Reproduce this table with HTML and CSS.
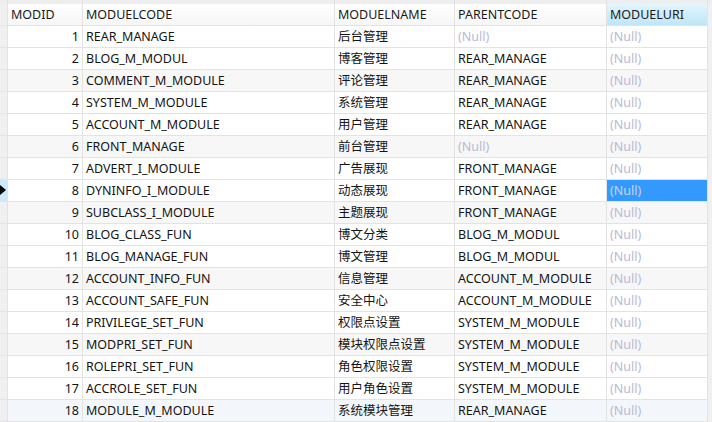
FILE: index.html
```html
<!DOCTYPE html>
<html>
<head>
<meta charset="utf-8">
<link rel="stylesheet" href="styles.css">
</head>
<body>
<div class="grid">
  <div class="topstrip"><span class="ts ind"></span><span class="ts c1"></span><span class="ts c2"></span><span class="ts c3"></span><span class="ts c4"></span><span class="ts c5"></span></div>
  <div class="row head">
    <div class="cell ind"></div>
    <div class="cell">MODID</div>
    <div class="cell">MODUELCODE</div>
    <div class="cell">MODUELNAME</div>
    <div class="cell">PARENTCODE</div>
    <div class="cell hsel">MODUELURI</div>
  </div>
  <div class="row"><div class="cell ind"></div><div class="cell num">1</div><div class="cell">REAR_MANAGE</div><div class="cell">后台管理</div><div class="cell null">(Null)</div><div class="cell null">(Null)</div></div>
  <div class="row"><div class="cell ind"></div><div class="cell num">2</div><div class="cell">BLOG_M_MODUL</div><div class="cell">博客管理</div><div class="cell">REAR_MANAGE</div><div class="cell null">(Null)</div></div>
  <div class="row alt"><div class="cell ind"></div><div class="cell num">3</div><div class="cell">COMMENT_M_MODULE</div><div class="cell">评论管理</div><div class="cell">REAR_MANAGE</div><div class="cell null">(Null)</div></div>
  <div class="row"><div class="cell ind"></div><div class="cell num">4</div><div class="cell">SYSTEM_M_MODULE</div><div class="cell">系统管理</div><div class="cell">REAR_MANAGE</div><div class="cell null">(Null)</div></div>
  <div class="row"><div class="cell ind"></div><div class="cell num">5</div><div class="cell">ACCOUNT_M_MODULE</div><div class="cell">用户管理</div><div class="cell">REAR_MANAGE</div><div class="cell null">(Null)</div></div>
  <div class="row alt"><div class="cell ind"></div><div class="cell num">6</div><div class="cell">FRONT_MANAGE</div><div class="cell">前台管理</div><div class="cell null">(Null)</div><div class="cell null">(Null)</div></div>
  <div class="row"><div class="cell ind"></div><div class="cell num">7</div><div class="cell">ADVERT_I_MODULE</div><div class="cell">广告展现</div><div class="cell">FRONT_MANAGE</div><div class="cell null">(Null)</div></div>
  <div class="row"><div class="cell ind cur"><span class="tri"></span></div><div class="cell num">8</div><div class="cell">DYNINFO_I_MODULE</div><div class="cell">动态展现</div><div class="cell">FRONT_MANAGE</div><div class="cell null sel">(Null)</div></div>
  <div class="row alt"><div class="cell ind"></div><div class="cell num">9</div><div class="cell">SUBCLASS_I_MODULE</div><div class="cell">主题展现</div><div class="cell">FRONT_MANAGE</div><div class="cell null">(Null)</div></div>
  <div class="row"><div class="cell ind"></div><div class="cell num">10</div><div class="cell">BLOG_CLASS_FUN</div><div class="cell">博文分类</div><div class="cell">BLOG_M_MODUL</div><div class="cell null">(Null)</div></div>
  <div class="row"><div class="cell ind"></div><div class="cell num">11</div><div class="cell">BLOG_MANAGE_FUN</div><div class="cell">博文管理</div><div class="cell">BLOG_M_MODUL</div><div class="cell null">(Null)</div></div>
  <div class="row alt"><div class="cell ind"></div><div class="cell num">12</div><div class="cell">ACCOUNT_INFO_FUN</div><div class="cell">信息管理</div><div class="cell">ACCOUNT_M_MODULE</div><div class="cell null">(Null)</div></div>
  <div class="row"><div class="cell ind"></div><div class="cell num">13</div><div class="cell">ACCOUNT_SAFE_FUN</div><div class="cell">安全中心</div><div class="cell">ACCOUNT_M_MODULE</div><div class="cell null">(Null)</div></div>
  <div class="row"><div class="cell ind"></div><div class="cell num">14</div><div class="cell">PRIVILEGE_SET_FUN</div><div class="cell">权限点设置</div><div class="cell">SYSTEM_M_MODULE</div><div class="cell null">(Null)</div></div>
  <div class="row alt"><div class="cell ind"></div><div class="cell num">15</div><div class="cell">MODPRI_SET_FUN</div><div class="cell">模块权限点设置</div><div class="cell">SYSTEM_M_MODULE</div><div class="cell null">(Null)</div></div>
  <div class="row"><div class="cell ind"></div><div class="cell num">16</div><div class="cell">ROLEPRI_SET_FUN</div><div class="cell">角色权限设置</div><div class="cell">SYSTEM_M_MODULE</div><div class="cell null">(Null)</div></div>
  <div class="row"><div class="cell ind"></div><div class="cell num">17</div><div class="cell">ACCROLE_SET_FUN</div><div class="cell">用户角色设置</div><div class="cell">SYSTEM_M_MODULE</div><div class="cell null">(Null)</div></div>
  <div class="row hover"><div class="cell ind"></div><div class="cell num">18</div><div class="cell">MODULE_M_MODULE</div><div class="cell">系统模块管理</div><div class="cell">REAR_MANAGE</div><div class="cell null">(Null)</div></div>
</div>
</body>
</html>
```
FILE: styles.css
```css
html, body {
  margin: 0;
  padding: 0;
  background: #f0f0f0;
  width: 712px;
  height: 422px;
  overflow: hidden;
}
body {
  font-family: "Noto Sans", "Noto Sans CJK SC", sans-serif;
  font-size: 12.5px;
  color: #141414;
}
.grid {
  width: 712px;
}
.topstrip {
  display: grid;
  grid-template-columns: 8px 75px 252px 120px 152px 101px;
  height: 4px;
  background: #eeeeee;
}
.ts {
  border-right: 1px solid #e2e2e2;
}
.row {
  display: grid;
  grid-template-columns: 8px 75px 252px 120px 152px 101px;
  height: 22px;
}
.cell {
  box-sizing: border-box;
  height: 22px;
  border-right: 1px solid #e3e3e3;
  border-bottom: 1px solid #e3e3e3;
  padding: 0 3px;
  line-height: 21px;
  white-space: nowrap;
  overflow: hidden;
  background: #ffffff;
}
.row.alt .cell { background: #f7f7f7; }
.row.hover .cell { background: #f3f7fb; }
.cell.ind {
  background: #f0f0f0 !important;
  padding: 0;
  position: relative;
}
.cell.ind.cur {
  background: #cdeafa !important;
}
.tri {
  position: absolute;
  left: 0;
  top: 5px;
  width: 0;
  height: 0;
  border-top: 5px solid transparent;
  border-bottom: 5px solid transparent;
  border-left: 6px solid #000000;
}
.cell.num { text-align: right; }
.cell.null { color: #b9b9d4; }
.cell.sel {
  background: #3399ff !important;
  color: #c9d6ee;
}
.head .cell {
  background: linear-gradient(#ffffff, #f6f6f6);
  color: #1a1a1a;
}
.head .cell.ind { background: #f0f0f0; }
.head .cell.hsel {
  background: linear-gradient(#e2f5fd, #bfe6f8);
}
```
